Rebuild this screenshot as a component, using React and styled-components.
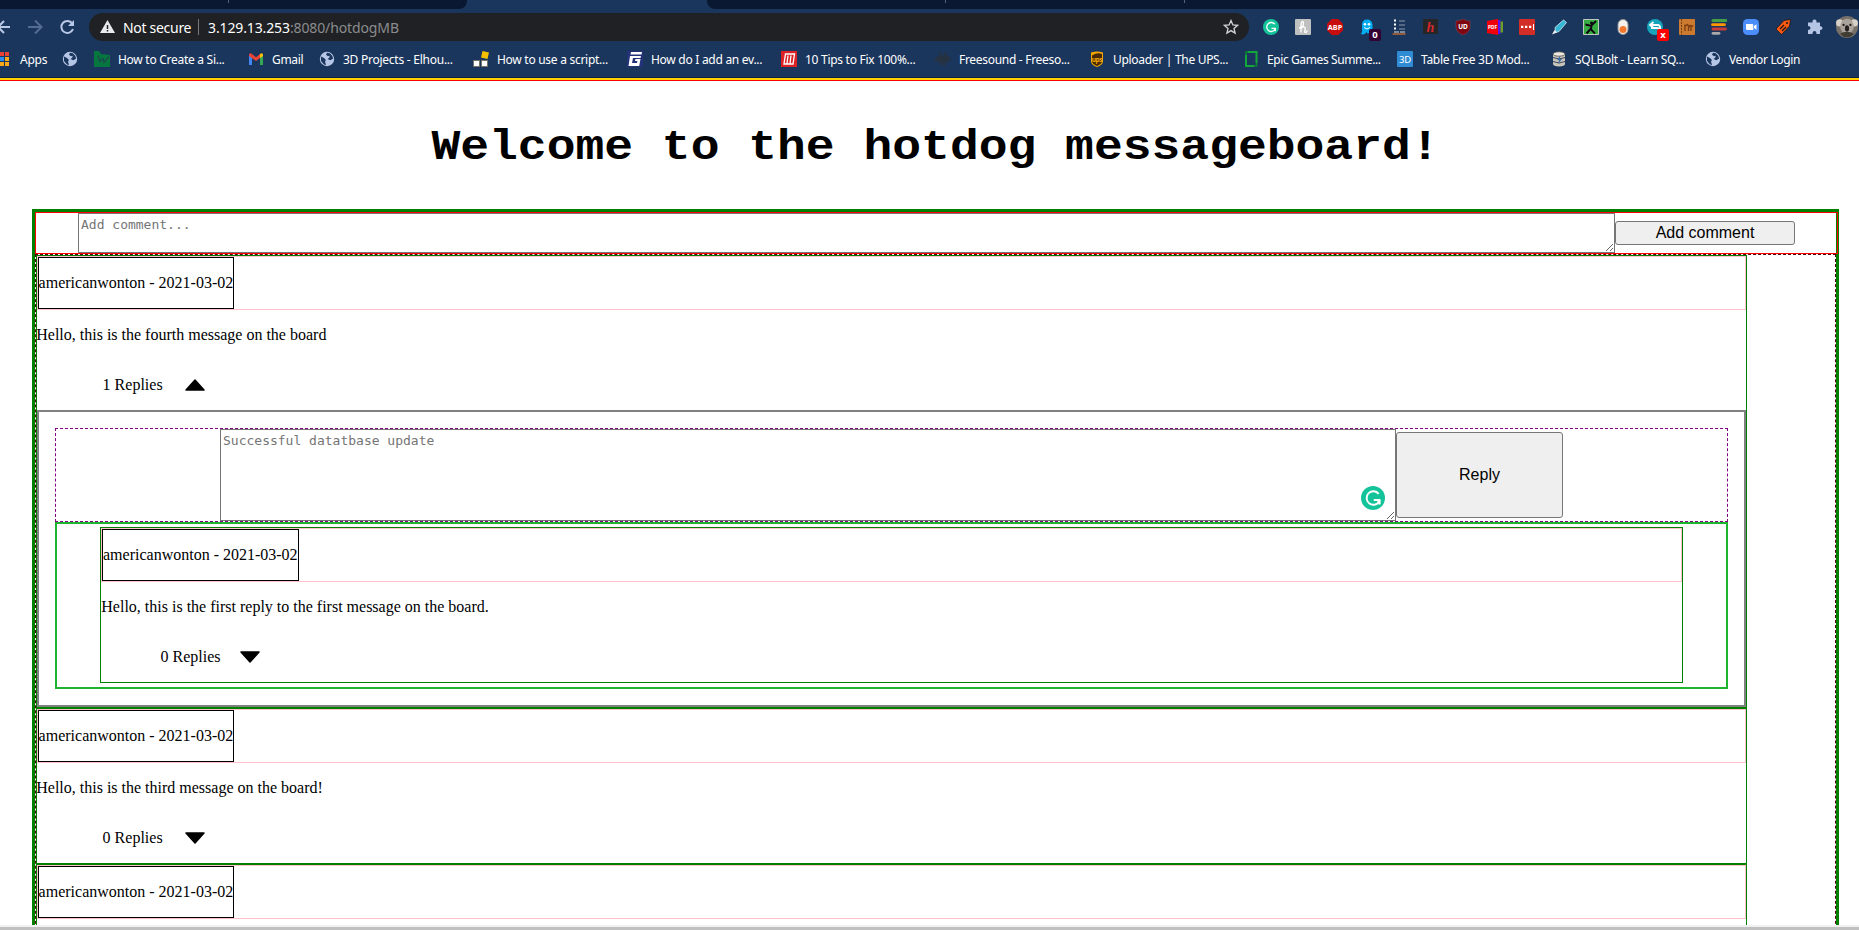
import React from "react";
import styled, { createGlobalStyle } from "styled-components";

const GlobalStyle = createGlobalStyle`
  * { box-sizing: border-box; }
  html, body { margin: 0; padding: 0; background: #fff; overflow: hidden; }
`;

const Window = styled.div`
  display: flex;
  flex-direction: column;
  width: 1859px;
  height: 930px;
  overflow: hidden;
  background: #fff;
`;

/* ---------- Browser chrome ---------- */

const Chrome = styled.header`
  flex: none;
  height: 81px;
  background: #1b365d;
  border-bottom: 1px solid #ff0000;
  font-family: "Noto Sans", "Open Sans", sans-serif;
  color: #fff;
`;

const TabStrip = styled.div`
  display: flex;
  justify-content: space-between;
  height: 9px;
`;

const TabGroup = styled.div`
  display: flex;
  width: ${(p) => p.$width}px;
  background: #0a1931;
  border-radius: ${(p) => (p.$side === "left" ? "0 0 8px 0" : "0 0 0 8px")};
`;

const TabGap = styled.div`
  width: ${(p) => p.$width}px;
  height: 3px;
  border-right: 1px solid #52627c;
`;

const Toolbar = styled.div`
  display: flex;
  align-items: center;
  height: 36px;
`;

const NavButtons = styled.div`
  display: flex;
  flex: none;
  width: 89px;
  height: 28px;
  align-items: center;
`;

const Omnibox = styled.div`
  display: flex;
  flex: none;
  align-items: center;
  width: 1160px;
  height: 28px;
  padding: 0 10px 0 11px;
  border-radius: 14px;
  background: #202124;
  font-size: 14px;
  white-space: pre;
`;

const Security = styled.span`
  width: 75px;
  margin-left: 8px;
  letter-spacing: -0.3px;
`;

const Divider = styled.span`
  width: 1px;
  height: 16px;
  margin-right: 9px;
  background: #78797c;
`;

const Address = styled.span`
  flex: 1;
  color: #8b8c8f;
  letter-spacing: ${(p) => p.$ls}px;
  b { font-weight: 400; color: #fff; }
`;

const Extensions = styled.div`
  display: flex;
  flex: none;
  align-items: center;
  margin-left: 6px;
`;

const Extension = styled.div`
  position: relative;
  display: flex;
  flex: none;
  align-items: center;
  justify-content: center;
  width: 32px;
  height: 28px;
`;

const Badge = styled.span`
  position: absolute;
  left: 18px;
  top: 16px;
  width: 12px;
  height: 12px;
  border-radius: 2px;
  background: ${(p) => p.$color};
  font: bold 9.5px/12px "Noto Sans", sans-serif;
  text-align: center;
`;

const Bookmarks = styled.nav`
  display: flex;
  align-items: flex-start;
  height: 32px;
  margin-left: -7px;
`;

const Bookmark = styled.div`
  display: flex;
  flex: none;
  align-items: center;
  gap: 8px;
  width: ${(p) => p.$width}px;
  height: 28px;
  font-size: 12px;
  letter-spacing: ${(p) => p.$ls || 0}px;
  white-space: pre;
`;

const ChromeEdge = styled.div`
  height: 3px;
  border-top: 1px solid #10233f;
  background: #ffd000;
`;

const Svg = ({ size = 16, children }) => (
  <svg width={size} height={size} viewBox="0 0 16 16" fill="none">
    {children}
  </svg>
);

const Globe = () => (
  <Svg>
    <circle cx="8" cy="8" r="7.2" fill="#b6c6e6" />
    <path d="M2 5.500L5 7l2 2-1 1.600 1 3.400-2-.6L2 10zM8 1.800l-1 2 2 1.400 1.800-.4-.6 2L8.600 8l2.600 1.200 2.800-1.400L13.400 5 10.800 2.200z" fill="#1b365d" />
  </Svg>
);

const AppsIcon = () => (
  <Svg>
    {["#e94235", "#e94235", "#e94235", "#2c8df0", "#2c8df0", "#fba919", "#3da64f", "#fba919", "#fba919"].map((c, i) => (
      <rect key={i} x={2 + (i % 3) * 5} y={1 + Math.floor(i / 3) * 5} width="4" height="4" fill={c} />
    ))}
  </Svg>
);

const WIcon = () => (
  <Svg>
    <path d="M0 0h5l2 3 9 1v12H0z" fill="#06783f" />
    <path d="M4 4.500l2 6 3-3 1 4 5-6" stroke="#1b4a4f" strokeWidth="1.300" />
  </Svg>
);

const GmailIcon = () => (
  <Svg>
    <path d="M1 3.500h3V14H1z" fill="#4285f4" />
    <path d="M12 3.500h3V14h-3z" fill="#34a853" />
    <path d="M1 3.500Q2 1.500 4 3l4 3.200V10L1 5z" fill="#ea4335" />
    <path d="M8 6.200L12 3v4l-4 3z" fill="#ea4335" />
    <path d="M12 3q2-1.500 3 .5V5l-3 2.200z" fill="#fbbc04" />
  </Svg>
);

const BlocksIcon = () => (
  <Svg>
    <path d="M9.500 0l6.500 1.500L14.500 8 8 6.500z" fill="#f6c000" />
    <path d="M.5 9.500h6v6h-6zM8.500 9.500h6v6h-6z" fill="#fff" stroke="#77736a" />
  </Svg>
);

const GIcon = () => (
  <Svg>
    <path d="M0 0h16v16H0z" fill="#24327a" />
    <path d="M4 1h11l-.5 2.500h-11zM3 5h11l-.5 2H6l-1 5h5l.4-2H8l.5-2h5l-1.300 7H1.500z" fill="#fff" />
  </Svg>
);

const MIcon = () => (
  <Svg>
    <path d="M0 0h16v16H0z" fill="#dc2225" />
    <path d="M3 13L4.500 3h9L12 13zM6 12.500l1-8M9 12.500l1-8" stroke="#fff" strokeWidth="1.300" />
  </Svg>
);

const WaveIcon = () => (
  <Svg>
    <path d="M1 7v3M3 5v6M5 1v13M7 5v7M9 3v12M11 1v11M13 5v6M15 7v2" stroke="#2b3038" strokeWidth="1.500" />
  </Svg>
);

const UpsIcon = () => (
  <Svg>
    <path d="M2 1.500Q8-.5 14 1.500V10q0 4-6 6-6-2-6-6z" fill="#f5a900" />
    <path d="M3 4.500Q8 1 13 3v7q0 3-5 5-5-2-5-5z" fill="#4a2905" />
    <text x="8" y="11" fontSize="6.500" fontWeight="700" textAnchor="middle" fill="#f5a900" fontFamily="Noto Sans, sans-serif">ups</text>
  </Svg>
);

const FrameIcon = () => (
  <Svg>
    <path d="M5 1H13.500V12M11 15H3V4" stroke="#12a63b" strokeWidth="2" />
    <path d="M3 4V1h2M13.500 12v3H11" stroke="#0c8735" strokeWidth="1.500" />
  </Svg>
);

const ThreeDIcon = () => (
  <Svg>
    <rect width="16" height="16" rx="1" fill="#2f8bd3" />
    <text x="8" y="11.500" fontSize="9.500" textAnchor="middle" fill="#fff" fontFamily="Noto Sans, sans-serif">3D</text>
  </Svg>
);

const DatabaseIcon = () => (
  <Svg>
    <path d="M2 3v10q0 2 6 2.500 6-.5 6-2.500V3z" fill="#c9c5b8" />
    <ellipse cx="8" cy="3" rx="6" ry="2.200" fill="#eeeae0" stroke="#4d4d4d" strokeWidth=".8" />
    <path d="M2 6.500q6 3 12 0M2 10.500q6 3 12 0" stroke="#37475c" />
    <path d="M9 5L6 9h2l-1 4 4-5H9z" fill="#3d6ba6" />
  </Svg>
);

const bookmarks = [
  { icon: <AppsIcon />, label: " Apps", width: 69, ls: -0.2 },
  { icon: <Globe />, label: "", width: 32 },
  { icon: <WIcon />, label: "How to Create a Si...", width: 154, ls: -0.28 },
  { icon: <GmailIcon />, label: "Gmail", width: 71, ls: -0.3 },
  { icon: <Globe />, label: "3D Projects - Elhou...", width: 154, ls: -0.25 },
  { icon: <BlocksIcon />, label: "How to use a script...", width: 154, ls: -0.28 },
  { icon: <GIcon />, label: "How do I add an ev...", width: 154, ls: -0.28 },
  { icon: <MIcon />, label: "10 Tips to Fix 100%...", width: 154, ls: -0.28 },
  { icon: <WaveIcon />, label: "Freesound - Freeso...", width: 154, ls: -0.3 },
  { icon: <UpsIcon />, label: "Uploader | The UPS...", width: 154, ls: -0.3 },
  { icon: <FrameIcon />, label: "Epic Games Summe...", width: 154, ls: -0.4 },
  { icon: <ThreeDIcon />, label: "Table Free 3D Mod...", width: 154, ls: -0.3 },
  { icon: <DatabaseIcon />, label: "SQLBolt - Learn SQ...", width: 154, ls: -0.28 },
  { icon: <Globe />, label: "Vendor Login", width: 120, ls: -0.35 },
];

const GrammarlyIcon = ({ size = 16 }) => (
  <Svg size={size}>
    <circle cx="8" cy="8" r="8" fill="#15c39a" />
    <path d="M11.800 5.200A4.500 4.500 0 1 0 12 10.500M8.500 9.300h3.700v3" stroke="#fff" strokeWidth="1.300" />
    <path d="M9.500 9H13v3.200z" fill="#fff" />
  </Svg>
);

const glyph = { fontFamily: "Liberation Serif, serif", textAnchor: "middle" };

const extensions = [
  { icon: <GrammarlyIcon /> },
  { icon: <Svg><rect width="16" height="16" rx="1" fill="#bfbfbf" /><path d="M4 9Q8.500 8 8.500 4.200 8.500 2.500 7.300 2.500 6 3 6 6v7.500M6 9.800q1.200-2.300 3-2 1.800.4 1 2.700-.8 2.800.3 3 1.300.2 2-2" stroke="#fff" strokeWidth="1.300" /></Svg> },
  { icon: <Svg><path d="M4.700 0h6.600L16 4.700v6.600L11.300 16H4.700L0 11.300V4.700z" fill="#c70d0d" /><text x="8" y="10.700" fontSize="7.300" fontWeight="700" textAnchor="middle" fill="#fff" fontFamily="Noto Sans, sans-serif">ABP</text></Svg> },
  { icon: <Svg><path d="M3 13V6Q3 .5 8 .5T13.500 6v7q-1.500 2-3 0-1.500 3-3 0-2 4-6 1.500Q3 14 3 13z" fill="#00aef0" /><circle cx="6" cy="5.300" r="1.300" fill="#fff" /><circle cx="10" cy="5.300" r="1.300" fill="#fff" /><path d="M5 8.500q3 3 6 0" stroke="#fff" /></Svg>, badge: "0", color: "#330033" },
  { icon: <Svg><path d="M3 1.500h2M3 5.500h2M3 9.500h2" stroke="#fff" strokeWidth="2" /><path d="M8 2h6M8 6h6M8 10h6" stroke="#8e99aa" /><path d="M3 13h11" stroke="#ddd" strokeDasharray="5 1" /><path d="M1.500 15h13" stroke="#b96730" strokeWidth="1.500" /></Svg> },
  { icon: <Svg><rect width="15" height="15" fill="#262626" /><text x="7.500" y="12.500" fontSize="14" fontWeight="700" fontStyle="italic" fill="#d7262e" {...glyph}>h</text></Svg> },
  { icon: <Svg><path d="M1 2Q5 2 8 0q3 2 7 2v6q0 5-7 8-7-3-7-8z" fill="#7d0711" stroke="#a3515c" strokeWidth=".4" /><text x="8" y="9.500" fontSize="6.500" fontWeight="700" textAnchor="middle" fill="#fff" fontFamily="Noto Sans, sans-serif">UD</text></Svg> },
  { icon: <Svg><path d="M0 2l11-2v16L0 14z" fill="#f20009" /><path d="M11 1h2.500v14H11z" fill="#5a12f0" /><path d="M13.500 2.500H16v11h-2.500z" fill="#6c9d28" /><text x="5.500" y="9.800" fontSize="4.800" fontWeight="700" textAnchor="middle" fill="#fff" fontFamily="Noto Sans, sans-serif">PDF</text></Svg> },
  { icon: <Svg><rect width="16" height="16" rx="1" fill="#d32d27" /><path d="M2 6.800h2.300v2.300H2zM6 6.800h2.300v2.300H6zM10 6.800h2.300v2.300H10zM14 5h1v6h-1z" fill="#fff" /></Svg> },
  { icon: <Svg><path d="M4 8.500L12.500 1 15.500 3.500 8 12.500l-3.500 1z" fill="#35b6d6" stroke="#d5eef4" strokeWidth=".8" /><path d="M3.500 11L6 13.500 1 15.500z" fill="#f1f1ec" /></Svg> },
  { icon: <Svg><path d="M.5.5h15v15H.5z" fill="#35ad42" stroke="#bfc8bc" /><circle cx="8.500" cy="4" r="1.500" fill="#101" /><path d="M2.500 5.500L8 7l5-5M8.500 6.500L8 10.500l4 4M8 9.500L3.500 14.500" stroke="#101" strokeWidth="1.900" /></Svg> },
  { icon: <Svg><rect x="3" y=".5" width="10" height="15" rx="5" fill="#f4f1ec" stroke="#929292" /><circle cx="8" cy="10.500" r="3.500" fill="#f4772e" /></Svg> },
  { icon: <Svg><circle cx="8" cy="8" r="8" fill="#16a4bb" /><path d="M4 6h7q3 .5 2 5-1-2-3-2H4M6.500 3L3 6l3.500 3" stroke="#fff" strokeWidth="1.800" /></Svg>, badge: "x", color: "#ff0000" },
  { icon: <Svg><rect width="16" height="16" rx="1" fill="#cc7a2f" /><path d="M2.500 0v16" stroke="#704018" strokeDasharray="2 1" /><path d="M5 6.500h2l1.500-1L10 8l1-1.500 2.500.5-1.500 1v4M6 7.500V12M9.500 8v4" stroke="#7a3c10" strokeWidth="1.300" /></Svg> },
  { icon: <Svg><path d="M2 1.500h13" stroke="#43a047" strokeWidth="3" strokeLinecap="round" /><path d="M1.500 5.700h12" stroke="#ff9800" strokeWidth="2.800" strokeLinecap="round" /><path d="M2 10h12.500" stroke="#c93c37" strokeWidth="2.800" strokeLinecap="round" /><path d="M2 14.300h6" stroke="#a9a9a9" strokeWidth="2.800" strokeLinecap="round" /></Svg> },
  { icon: <Svg><rect width="16" height="16" rx="4.500" fill="#4b8dfa" /><path d="M3 5h6q1.300 0 1.300 1.300V11H4.300Q3 11 3 9.700zM11 7l2.500-1.700v5.400L11 9z" fill="#fff" /></Svg> },
  { icon: <Svg><path d="M1 10L9 1.500 15.500.5 14.500 7 6.500 15.500z" fill="#ff5a13" stroke="#111" strokeWidth=".7" /><path d="M5 10l4-4M7 12l4-4" stroke="#171717" strokeWidth="1.300" /><circle cx="12" cy="4" r="1" fill="#171717" /></Svg> },
  { icon: <Svg><path d="M1 3.500h4.500Q5.200.5 7.500.5T9.500 3.500H13V7.200q2.500-.2 2.500 1.900T13 11v4H9.500q0-3-2-3t-2 3H1v-4q2.500 0 2.500-2T1 7z" fill="#b5c5e5" /></Svg> },
  { icon: <Svg size={22}><circle cx="8" cy="8" r="8" fill="#777069" /><circle cx="2.600" cy="5" r="2.600" fill="#d6d0c6" /><circle cx="13.400" cy="5" r="2.600" fill="#d6d0c6" /><ellipse cx="8" cy="7.500" rx="5" ry="5.500" fill="#aaa39b" /><circle cx="5.500" cy="6.500" r=".8" fill="#181512" /><circle cx="10.500" cy="6.500" r=".8" fill="#181512" /><ellipse cx="8" cy="9" rx="1.500" ry="2.300" fill="#242020" /><path d="M3 13q5-3 10 0-5 5-10 0z" fill="#403d35" /></Svg> },
];

/* ---------- Message board page ---------- */

const Page = styled.main`
  flex: none;
  height: 844px;
  padding: 0 20px 0 32px;
  overflow: hidden;
  font: 16px/18px "Liberation Serif", "Times New Roman", serif;
  color: #000;
`;

const Title = styled.h1`
  margin: 0;
  padding: 37px 0;
  font: bold 48px/54px "Liberation Mono", "Courier New", monospace;
  text-align: center;
  transform: scaleY(0.9);
  transform-origin: 0 87px;
`;

const Board = styled.section`
  height: 760px;
  border: 3px solid green;
`;

const Composer = styled.form`
  display: flex;
  align-items: center;
  height: 42px;
  margin-right: -2px;
  padding-left: 42px;
  border: 1px solid #ff0000;
`;

const TextArea = styled.textarea`
  display: block;
  width: ${(p) => p.$width}px;
  height: ${(p) => p.$height}px;
  margin: 0;
  padding: 3px 2px 2px;
  border: 1px solid #767676;
  border-radius: 0;
  font: 13px/15px "DejaVu Sans Mono", monospace;
  &::placeholder { color: #757575; }
`;

const Button = styled.button`
  width: ${(p) => p.$width}px;
  height: ${(p) => p.$height}px;
  padding: 0;
  border: 1px solid #767676;
  border-radius: 3px;
  background: #efefef;
  color: #000;
  font: 16px "Liberation Sans", Arial, sans-serif;
`;

const MessageList = styled.div`
  height: 720px;
  border: 1px dashed #550008;
`;

const Post = styled.article`
  width: ${(p) => (p.$nested ? 1583 : 1711.4)}px;
  margin-left: ${(p) => (p.$nested ? 0 : -0.4)}px;
  border: 1px solid green;
`;

const PostHeader = styled.div`
  display: flex;
  border: 1px solid pink;
`;

const Author = styled.div`
  height: 52px;
  padding: 16px 0;
  border: 1px solid #000;
`;

const Message = styled.p`
  height: 50px;
  margin: 0;
  padding: 16px 0;
  text-indent: ${(p) => p.$indent}px;
`;

const Replies = styled.div`
  display: flex;
  align-items: center;
  gap: ${(p) => p.$gap}px;
  height: 50px;
  padding-left: ${(p) => p.$indent}px;
`;

const Thread = styled.div`
  padding: 16px 16px 16px 16.4px;
  border: 2px solid gray;
`;

const ReplyForm = styled.form`
  position: relative;
  display: flex;
  align-items: center;
  height: 94px;
  padding-left: 164px;
  border: 1px dashed purple;
`;

const Assistant = styled.div`
  position: absolute;
  left: 1305px;
  top: 57px;
  height: 24px;
`;

const ReplyList = styled.div`
  padding: 3px 43px 4px;
  border: 2px solid #1db530;
`;

const WindowEdge = styled.footer`
  flex: none;
  height: 5px;
  border-top: 2px solid #f0f0f0;
  background: #c0c0c0;
`;

const Triangle = ({ up }) => (
  <svg width="20" height="12" viewBox="0 0 20 12">
    <path d={up ? "M10 1L19 11H1z" : "M10 11L1 1h18z"} stroke="#000" strokeWidth="1.500" strokeLinejoin="round" />
  </svg>
);

const Entry = ({ text, count, open, nested, children }) => (
  <Post $nested={nested}>
    <PostHeader>
      <Author>americanwonton - 2021-03-02</Author>
    </PostHeader>
    <Message $indent={nested ? 0.3 : -0.4}>{text}</Message>
    {count !== undefined && (
      <Replies $indent={nested ? 59.5 : 66} $gap={nested ? 19.5 : 22}>
        {count} Replies
        <Triangle up={open} />
      </Replies>
    )}
    {children}
  </Post>
);

export default function App() {
  return (
    <Window>
      <GlobalStyle />
      <Chrome>
        <TabStrip>
          <TabGroup $width={467} $side="left">
            <TabGap $width={229} />
          </TabGroup>
          <TabGroup $width={1152} $side="right">
            <TabGap $width={239} />
            <TabGap $width={239} />
          </TabGroup>
        </TabStrip>
        <Toolbar>
          <NavButtons>
            <svg width="89" height="28" viewBox="0 0 89 28" fill="none">
              <path d="M10 14H-2M4 8l-6 6 6 6" stroke="#b9c8e6" strokeWidth="2" />
              <path d="M28 14h13M35 7.500l6.500 6.500-6.500 6.500" stroke="#536c93" strokeWidth="2" />
              <path d="M72.300 10.500A6 6 0 1 0 73 16" stroke="#b9c8e6" strokeWidth="2" />
              <path d="M74 7v6h-6z" fill="#b9c8e6" />
            </svg>
          </NavButtons>
          <Omnibox>
            <svg width="15" height="14" viewBox="0 0 15 14">
              <path d="M7.500 0L15 13H0z" fill="#e8eaed" />
              <path d="M7.500 5v4M7.500 10v1.600" stroke="#202124" strokeWidth="1.500" />
            </svg>
            <Security>Not secure</Security>
            <Divider />
            <Address $ls={-0.12}><b>3.129.13.253</b>:8080/hotdogMB</Address>
            <svg width="16" height="16" viewBox="0 0 16 16">
              <path d="M8 1.500l1.900 4.400 4.700.4-3.600 3.100 1.100 4.700L8 11.600l-4.100 2.500L5 9.400 1.400 6.300l4.700-.4z" fill="none" stroke="#d3d4d6" strokeWidth="1.300" />
            </svg>
          </Omnibox>
          <Extensions>
            {extensions.map((e, i) => (
              <Extension key={i}>
                {e.icon}
                {e.badge && <Badge $color={e.color}>{e.badge}</Badge>}
              </Extension>
            ))}
          </Extensions>
        </Toolbar>
        <Bookmarks>
          {bookmarks.map((b, i) => (
            <Bookmark key={i} $width={b.width} $ls={b.ls}>
              {b.icon}
              {b.label && <span>{b.label}</span>}
            </Bookmark>
          ))}
        </Bookmarks>
        <ChromeEdge />
      </Chrome>

      <Page>
        <Title>Welcome to the hotdog messageboard!</Title>
        <Board>
          <Composer>
            <TextArea $width={1537} $height={40} placeholder="Add comment..." />
            <Button type="button" $width={180} $height={24}>Add comment</Button>
          </Composer>
          <MessageList>
            <Entry text="Hello, this is the fourth message on the board" count={1} open>
              <Thread>
                <ReplyForm>
                  <TextArea $width={1176} $height={92} placeholder="Successful datatbase update" />
                  <Button type="button" $width={167} $height={86}>Reply</Button>
                  <Assistant>
                    <GrammarlyIcon size={24} />
                  </Assistant>
                </ReplyForm>
                <ReplyList>
                  <Entry
                    nested
                    text="Hello, this is the first reply to the first message on the board."
                    count={0}
                  />
                </ReplyList>
              </Thread>
            </Entry>
            <Entry text="Hello, this is the third message on the board!" count={0} />
            <Entry />
          </MessageList>
        </Board>
      </Page>
      <WindowEdge />
    </Window>
  );
}
